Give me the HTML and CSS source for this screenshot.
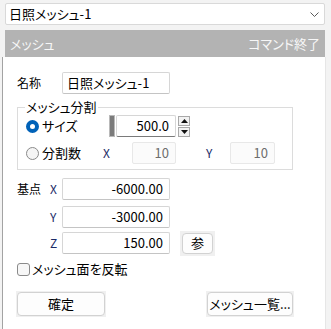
FILE: index.html
```html
<!DOCTYPE html>
<html lang="ja">
<head>
  <meta charset="UTF-8">
  <title>メッシュ</title>
  <link rel="stylesheet" href="styles.css">
</head>
<body>
  <div class="top">
    <div class="combo">
      <span>日照メッシュ-1</span>
      <svg class="chev" width="9" height="5" viewBox="0 0 9 5"><polyline points="0.5,0.5 4.5,4.5 8.5,0.5" fill="none" stroke="#5a5a5a" stroke-width="1"/></svg>
    </div>
    <div class="titlebar"><span>メッシュ</span><span>コマンド終了</span></div>
  </div>

  <div class="panel">
    <div class="row">
      <span class="lbl name-lbl">名称</span>
      <div class="box wide left">日照メッシュ-1</div>
    </div>

    <fieldset class="group">
      <legend>メッシュ分割</legend>
      <div class="row">
        <label class="opt opt-size"><span class="radio on"></span>サイズ</label>
        <span class="slider"></span>
        <div class="box spin-val">500.0</div>
        <div class="spin">
          <span class="spin-btn"><svg width="7" height="4" viewBox="0 0 7 4"><polygon points="0,4 3.5,0 7,4" fill="#111"/></svg></span>
          <span class="spin-btn"><svg width="7" height="4" viewBox="0 0 7 4"><polygon points="0,0 3.5,4 7,0" fill="#111"/></svg></span>
        </div>
      </div>
      <div class="row row-div">
        <label class="opt opt-div"><span class="radio"></span>分割数</label>
        <span class="axis ax-x">X</span>
        <div class="box off small">10</div>
        <span class="axis ax-y">Y</span>
        <div class="box off small2">10</div>
      </div>
    </fieldset>

    <div class="row pt-x">
      <span class="lbl base-lbl">基点</span>
      <span class="axis">X</span>
      <div class="box wide">-6000.00</div>
    </div>
    <div class="row pt-y">
      <span class="lbl base-lbl"></span>
      <span class="axis">Y</span>
      <div class="box wide">-3000.00</div>
    </div>
    <div class="row pt-z">
      <span class="lbl base-lbl"></span>
      <span class="axis">Z</span>
      <div class="box wide">150.00</div>
      <div class="btn-wrap ref"><button class="btn">参</button></div>
    </div>

    <label class="check-row"><span class="check"></span>メッシュ面を反転</label>

    <div class="actions">
      <div class="btn-wrap"><button class="btn big">確定</button></div>
      <div class="btn-wrap"><button class="btn big list">メッシュ一覧...</button></div>
    </div>
  </div>
</body>
</html>
```

FILE: styles.css
```css
*, *::before, *::after { box-sizing: border-box; margin: 0; padding: 0; }
html, body { height: 100%; }
body {
  font-family: 'Noto Sans CJK JP', sans-serif;
  font-size: 12px; line-height: 16px; color: #000;
  font-feature-settings: "palt";
  background: #f3f3f3; overflow: hidden;
}
.top { padding: 3px 6px 0 5px; }
.combo {
  height: 22px; background: #fff; border: 1px solid #d9d9d9; border-radius: 2px;
  display: flex; align-items: center; justify-content: space-between; padding: 0 5px 0 3px;
  font-size: 13px;
}
.chev { margin-top: 1px; }
.titlebar {
  margin-top: 5px; height: 27px; background: #b3b3b3; color: #f7f7f7;
  display: flex; align-items: center; justify-content: space-between; padding: 0 5px 0 5px;
  font-size: 13px;
}
.panel {
  margin-left: 2px; width: 324px; height: 272px; background: #fff;
  border-left: 1px solid #a3a3a3; border-right: 1px solid #e6e6e6;
  padding: 15px 0 0 14px;
}
.row { display: flex; align-items: center; height: 22px; }
.lbl { display: block; }
.name-lbl { width: 45px; }
.base-lbl { width: 33px; }
.box {
  height: 22px; background: #fff; border: 1px solid #d6d6d6; border-bottom-color: #c4c4c4;
  border-radius: 2px; display: flex; align-items: center; justify-content: flex-end;
  padding: 0 6px; font-size: 13px;
}
.box.left { justify-content: flex-start; padding: 0 4px; }
.wide { width: 108px; }
.group {
  margin-top: 5px; width: 276px; border: 1px solid #dcdcdc;
  padding: 0 0 5px 7px;
}
.group legend { padding: 0 1px; font-size: 13px; line-height: 16px; }
.opt { display: flex; align-items: center; gap: 3px; font-size: 13px; }
.opt-size { width: 84px; }
.opt-div { width: 78px; }
.radio {
  width: 13px; height: 13px; border-radius: 50%; margin-left: 1px;
  border: 1px solid #8a8a8a; background: #f5f5f5;
}
.radio.on { border: 4px solid #0062b8; background: #fff; }
.slider { width: 6px; height: 22px; background: #7b7b7b; border: 1px solid #b9b9b9; margin-right: 1px; }
.spin-val { width: 60px; border-bottom: 1px solid #7a7a7a; }
.spin { display: flex; flex-direction: column; gap: 1px; margin-left: 2px; }
.spin-btn {
  width: 12px; height: 10px; border: 1px solid #a8a8a8; background: #f2f2f2;
  display: flex; align-items: center; justify-content: center;
}
.row-div { margin-top: 5px; }
.axis { display: block; width: 12px; color: #1b2a66; font-size: 12px; }
.ax-x { width: 29px; }
.ax-y { width: 24px; margin-left: 30px; }
.box.off { background: #fbfbfb; border-color: #e8e8e8; color: #6d6d6d; }
.small { width: 44px; }
.small2 { width: 45px; }
.pt-x { margin-top: 8px; }
.pt-y { margin-top: 6px; }
.pt-z { margin-top: 4px; }
.btn-wrap { background: #f0f0f0; padding: 1px; }
.ref { margin-left: 10px; padding: 2px; }
.btn {
  font: inherit; font-size: 13px; color: #000; background: #fdfdfd;
  border: 1px solid #d2d2d2; border-radius: 4px; display: block;
}
.ref .btn { width: 31px; height: 21px; }
.check-row { display: flex; align-items: center; gap: 2px; margin-top: 8px; height: 14px; font-size: 13px; }
.check { width: 13px; height: 13px; border: 1px solid #8a8a8a; border-radius: 3px; background: #f7f7f7; }
.actions { display: flex; justify-content: space-between; width: 278px; margin-top: 15px; margin-left: -1px; }
.btn.big { width: 88px; height: 24px; }
.btn.list { width: 86px; }
```
